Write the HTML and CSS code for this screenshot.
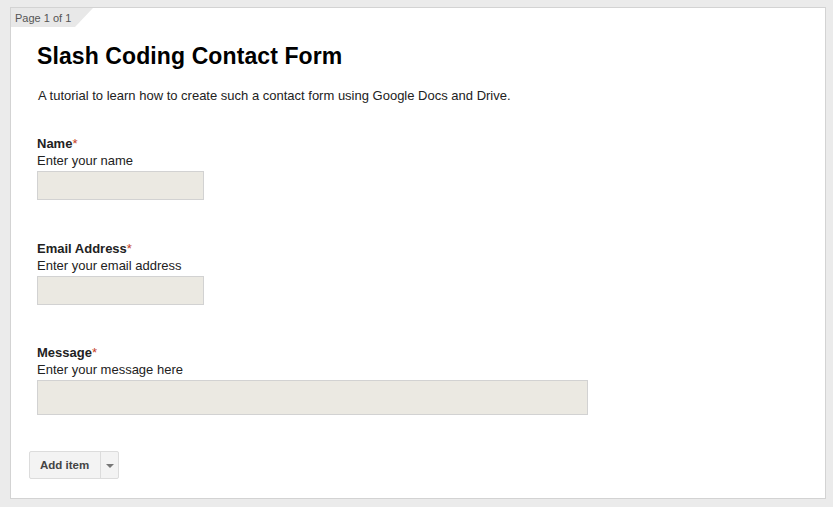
FILE: index.html
```html
<!DOCTYPE html>
<html lang="en">
<head>
<meta charset="utf-8">
<title>Slash Coding Contact Form</title>
<link rel="stylesheet" href="styles.css">
</head>
<body>
<div class="page">
  <div class="tab">Page 1 of 1</div>
  <div class="content">
    <h1 class="title">Slash Coding Contact Form</h1>
    <p class="desc">A tutorial to learn how to create such a contact form using Google Docs and Drive.</p>
    <div class="items">
      <div class="item">
        <div class="label">Name<span class="req">*</span></div>
        <div class="help">Enter your name</div>
        <div class="field"></div>
      </div>
      <div class="item">
        <div class="label">Email Address<span class="req">*</span></div>
        <div class="help">Enter your email address</div>
        <div class="field"></div>
      </div>
      <div class="item">
        <div class="label">Message<span class="req">*</span></div>
        <div class="help">Enter your message here</div>
        <div class="field area"></div>
      </div>
    </div>
    <div class="add-btn">
      <span class="main">Add item</span>
      <span class="drop"><span class="arrow"></span></span>
    </div>
  </div>
</div>
</body>
</html>
```
FILE: styles.css
```css
html, body {
  margin: 0;
  padding: 0;
}
body {
  background: #ebebeb;
  font-family: "Liberation Sans", Arial, sans-serif;
  color: #222;
}
.page {
  margin: 7px 0 0 10px;
  width: 814px;
  height: 490px;
  border: 1px solid #d3d3d3;
  background: #fff;
}
.tab {
  width: 82px;
  height: 19px;
  box-sizing: border-box;
  padding: 1px 0 0 4px;
  font-size: 11px;
  line-height: 18px;
  color: #555;
  background: #e8e8e8;
  clip-path: polygon(0 0, 100% 0, 64px 100%, 0 100%);
}
.content {
  padding: 16px 0 0 26px;
}
.title {
  margin: 0;
  font-size: 23px;
  line-height: 26px;
  font-weight: bold;
  color: #000;
  letter-spacing: 0.1px;
}
.desc {
  margin: 18px 0 0 1px;
  font-size: 13px;
  line-height: 17px;
}
.items {
  margin-top: 31px;
  display: flex;
  flex-direction: column;
  gap: 39.5px;
}
.label {
  font-size: 13px;
  line-height: 17px;
  font-weight: bold;
}
.req {
  color: #c43b1d;
  font-weight: normal;
}
.help {
  font-size: 13px;
  line-height: 17px;
}
.field {
  margin-top: 2px;
  width: 167px;
  height: 29px;
  box-sizing: border-box;
  border: 1px solid #d2d2d2;
  background: #ebe9e2;
}
.field.area {
  width: 551px;
  height: 35px;
}
.add-btn {
  margin: 36px 0 0 -8px;
  display: inline-flex;
  height: 28px;
  box-sizing: border-box;
  border: 1px solid #dcdcdc;
  border-radius: 2px;
  background: #f3f3f3;
}
.main {
  width: 70px;
  box-sizing: border-box;
  padding-left: 10px;
  font-size: 11.5px;
  line-height: 26px;
  font-weight: bold;
  color: #444;
}
.drop {
  width: 17px;
  border-left: 1px solid #dcdcdc;
  display: flex;
  align-items: center;
  justify-content: center;
}
.arrow {
  width: 0;
  height: 0;
  border-left: 4px solid transparent;
  border-right: 4px solid transparent;
  border-top: 4px solid #777;
  margin-top: 1px;
}
```
